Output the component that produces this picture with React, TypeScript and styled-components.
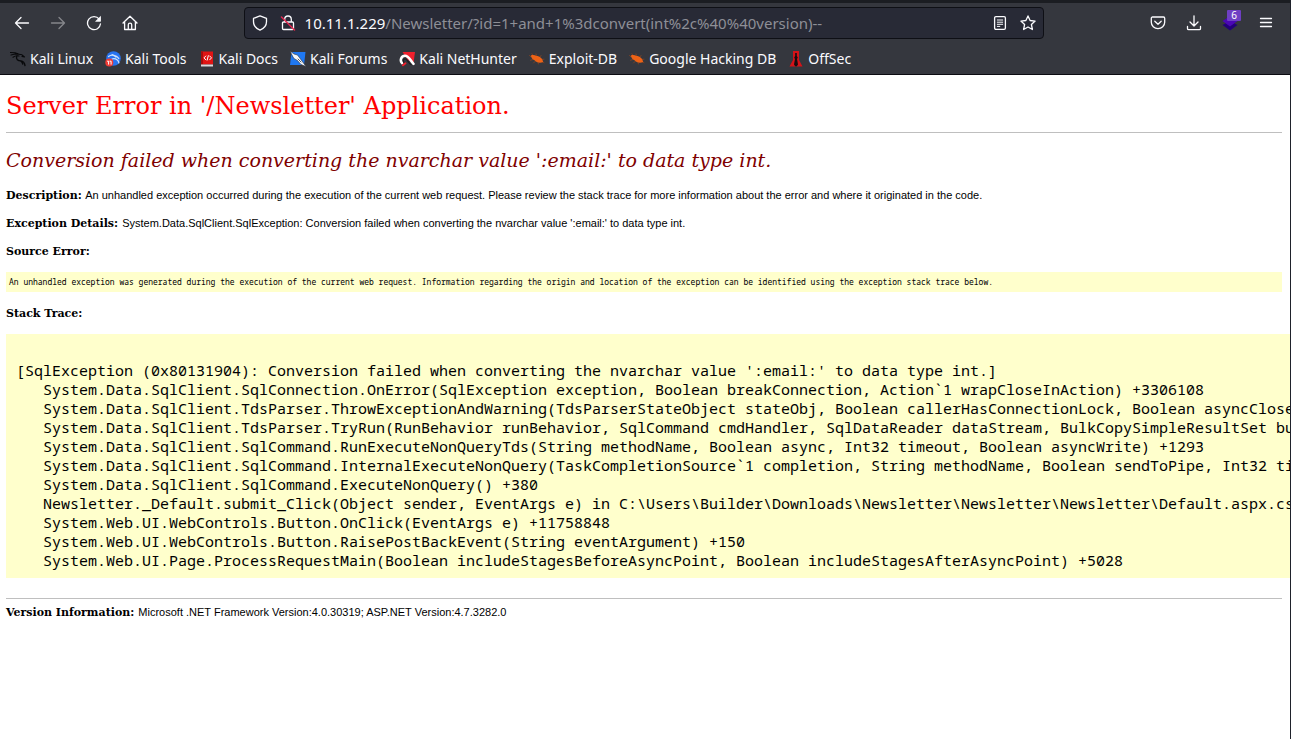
import React from "react";
import styled, { createGlobalStyle } from "styled-components";

const GlobalStyle = createGlobalStyle`
  * { box-sizing: border-box; }
  html, body, #root { height: 100%; }
  body { margin: 0; background: #fff; overflow: hidden; }
`;

const Window = styled.div`
  min-height: 100%;
  display: flex;
  flex-direction: column;
  border-right: 1px solid #1f222b;
  overflow: hidden;
`;

const Chrome = styled.header`
  flex: none;
  border-top: 3px solid #1b1d22;
  border-bottom: 1px solid #0c0c12;
  background: #35373e;
  color: #fbfbfe;
  font-family: "Noto Sans", sans-serif;
`;

const Toolbar = styled.nav`
  display: flex;
  align-items: center;
  height: 40px;
  padding: 0 6px 0 4px;
`;

const ButtonGroup = styled.div`
  display: flex;
  flex: none;
`;

const Spring = styled.div`
  flex: 3 1 0;
`;

const ToolButton = styled.button`
  display: flex;
  align-items: center;
  justify-content: center;
  position: relative;
  width: 36px;
  height: 32px;
  padding: 0;
  border: 0;
  background: none;
  color: #fbfbfe;
  &:disabled { color: #85868b; }
`;

const Badge = styled.span`
  position: absolute;
  top: 3px;
  right: 7px;
  width: 14px;
  height: 11px;
  border-radius: 1px;
  background: #6f3fc4;
  color: #fff;
  font: 10px/11px "Noto Sans", sans-serif;
  text-align: center;
`;

const AddressBar = styled.form`
  flex: 25 1 0;
  min-width: 0;
  display: flex;
  align-items: center;
  height: 32px;
  padding: 0 1px;
  border: 1px solid #0e0f15;
  border-radius: 4px;
  background: #282a36;
`;

const FieldButton = styled(ToolButton)`
  flex: none;
  width: 28px;
  height: 28px;
`;

const Host = styled.label`
  flex: none;
  padding-left: 3px;
  font-size: 15px;
  line-height: 20px;
`;

const Address = styled.input`
  flex: 1;
  min-width: 0;
  padding: 0;
  border: 0;
  outline: 0;
  background: none;
  color: #8e8f96;
  font: 15px/20px "Noto Sans", sans-serif;
`;

const Bookmarks = styled.nav`
  display: flex;
  align-items: center;
  gap: 12px;
  height: 31px;
  padding: 0 10px;
`;

const Bookmark = styled.a`
  display: flex;
  align-items: center;
  gap: 4px;
  color: #fbfbfe;
  font-size: 14px;
  line-height: 20px;
  white-space: nowrap;
  text-decoration: none;
`;

const Page = styled.main`
  flex: 1;
  padding: 15px 8px 14px 6px;
  background: #fff;
  color: #000;
  font: 11px/14px "Liberation Sans", Arial, sans-serif;
`;

const Title = styled.h1`
  margin: 0 0 10px;
  color: #f00;
  font: 24px/32px "DejaVu Serif", serif;
`;

const Rule = styled.hr`
  height: 1px;
  margin: 0;
  border: 0;
  background: #bfbfbf;
`;

const Subtitle = styled.h2`
  margin: 15px 0 16px;
  color: #800000;
  font: italic 19px/24px "DejaVu Serif", serif;
`;

const Line = styled.p`
  margin: 0 0 13px;
`;

const Term = styled.b`
  margin-right: 1px;
  font-family: "DejaVu Serif", serif;
`;

const Note = styled.pre`
  margin: 0 0 14px;
  padding: 4px 3px;
  background: #ffffcc;
  font: 8px/12px "Noto Sans Mono", "DejaVu Sans Mono", monospace;
`;

const Trace = styled.pre`
  min-width: max-content;
  margin: 0 -8px 20px 0;
  padding: 8px 10px;
  background: #ffffcc;
  font: 15px/19px "Noto Sans Mono", "DejaVu Sans Mono", monospace;
`;

const Version = styled.footer`
  padding-top: 6px;
`;

type GlyphProps = { children: React.ReactNode; size?: number };

const Glyph = ({ children, size = 16 }: GlyphProps) => (
  <svg width={size} height={size} viewBox="0 0 16 16" fill="none" stroke="currentColor"
    strokeWidth="1.3" strokeLinecap="round" strokeLinejoin="round" aria-hidden="true">
    {children}
  </svg>
);

const Dragon = () => (
  <Glyph>
    <path d="M0 1.500l5 .2 3.500 1.300M1 4l4-1 3.500 .2M3 6.200C5 4.800 7 4.300 9 5M9 3.200l3 .6 2.500 2.200-2.500-.6" stroke="#08090b" strokeWidth="1.100" />
    <path d="M6.800 5.200C5.500 8.500 8 9.800 11 9.900c2.500.2 3.500 2 4 4.600M10.500 10c1.500.8 2 2 2.300 3" stroke="#08090b" strokeWidth="1.400" />
  </Glyph>
);

const ToolsMark = () => (
  <Glyph>
    <circle cx="8.500" cy="7.500" r="7.300" fill="#2874f0" stroke="none" />
    <path d="M3.500 5.500c2.500-2 5.500-1.600 7.500.5M7 8c2-.6 3.500-.3 5 .7 1.300.9 1.800 2 1.900 3.200M7 3.600l4.500 1.600 2.300 2.300" stroke="#cfe1fb" strokeWidth="1.200" />
    <circle cx="4.300" cy="11.500" r="4" fill="#ef3b35" stroke="none" />
    <path d="M2.500 10.200h1.100v3M5 10.200h1.100v3" stroke="#fff" strokeWidth="1" />
  </Glyph>
);

const DocsMark = () => (
  <Glyph>
    <path d="M2 .5h12v13H2z" fill="#e11414" stroke="none" />
    <path d="M2 .5h2v13H2z" fill="#a90b0b" stroke="none" />
    <path d="M2 13.500h12V15.500H2z" fill="#d9d9dc" stroke="none" />
    <path d="M6.800 5L5 6.900l1.800 1.900M10.700 5l1.800 1.900-1.800 1.900M9.300 4.700L8.200 9.100" stroke="#fff" strokeWidth="1" />
  </Glyph>
);

const ForumsMark = () => (
  <Glyph>
    <path d="M1.500 1h14l-1.500 13H0z" fill="#1f78f2" stroke="none" />
    <path d="M0 0l4 3 3.500 1 3 4 5.500 7.500-5-2-3.500-4L4 7.500z" fill="#f4f7fa" stroke="#30343b" strokeWidth=".6" />
    <path d="M8 8l3 3" stroke="#30343b" strokeWidth=".8" />
  </Glyph>
);

const HunterMark = () => (
  <Glyph>
    <path d="M3.500 1H16l-1.500 11L9 9z" fill="#f0202d" stroke="none" />
    <path d="M3 12C.5 9 2.500 4.800 6 4.800c4 0 5 4.500 8.500 8" stroke="#fff" strokeWidth="2.600" />
    <path d="M5 11.500c-1.500-2-.5-3.700 1-3.700 2.500 0 3 4 6 5.700" stroke="#1d1e22" strokeWidth="1.300" />
    <path d="M4 14.300l2.500-2" stroke="#f0202d" strokeWidth="2" />
  </Glyph>
);

const BugMark = () => (
  <Glyph>
    <path d="M4.500 5L3 2.800M7.500 5l-.5-2M10.500 6.500l1.500-2M12.500 8.500l2.500-.3M4 8.500l-2.500.7M6 10.500L4.500 12M9 11.500l.5 1.500M13 10.500l2 1.200M2 6L.5 4.500" stroke="#8c451f" strokeWidth=".8" />
    <path d="M1.800 4.500c2-.8 4.200-.5 5.700.4 3.300 0 6 2.300 6.700 6.100-3 1.300-7 .6-8.700-1.800C3.500 8.500 2.300 6.800 1.800 4.500z" fill="#ed6216" stroke="none" />
  </Glyph>
);

const OffSecMark = () => (
  <Glyph>
    <path d="M5 0h6v9l3.500 6.500h-13L5 9z" fill="#d51218" stroke="none" />
    <path d="M7.200 2h1.600v3l1 1.500-.8 1.500 1 5.500-1.200 1.800H7.200L6 13.500 7 8l-.8-1.500 1-1.500z" fill="#160d10" stroke="none" />
  </Glyph>
);

const bookmarks = [
  { name: "Kali Linux", icon: <Dragon /> },
  { name: "Kali Tools", icon: <ToolsMark /> },
  { name: "Kali Docs", icon: <DocsMark /> },
  { name: "Kali Forums", icon: <ForumsMark /> },
  { name: "Kali NetHunter", icon: <HunterMark /> },
  { name: "Exploit-DB", icon: <BugMark /> },
  { name: "Google Hacking DB", icon: <BugMark /> },
  { name: "OffSec", icon: <OffSecMark /> },
];

const stack = String.raw`
[SqlException (0x80131904): Conversion failed when converting the nvarchar value ':email:' to data type int.]
   System.Data.SqlClient.SqlConnection.OnError(SqlException exception, Boolean breakConnection, Action${"`"}1 wrapCloseInAction) +3306108
   System.Data.SqlClient.TdsParser.ThrowExceptionAndWarning(TdsParserStateObject stateObj, Boolean callerHasConnectionLock, Boolean asyncClose) +
   System.Data.SqlClient.TdsParser.TryRun(RunBehavior runBehavior, SqlCommand cmdHandler, SqlDataReader dataStream, BulkCopySimpleResultSet bulkC
   System.Data.SqlClient.SqlCommand.RunExecuteNonQueryTds(String methodName, Boolean async, Int32 timeout, Boolean asyncWrite) +1293
   System.Data.SqlClient.SqlCommand.InternalExecuteNonQuery(TaskCompletionSource${"`"}1 completion, String methodName, Boolean sendToPipe, Int32 timeo
   System.Data.SqlClient.SqlCommand.ExecuteNonQuery() +380
   Newsletter._Default.submit_Click(Object sender, EventArgs e) in C:\Users\Builder\Downloads\Newsletter\Newsletter\Newsletter\Default.aspx.cs:43
   System.Web.UI.WebControls.Button.OnClick(EventArgs e) +11758848
   System.Web.UI.WebControls.Button.RaisePostBackEvent(String eventArgument) +150
   System.Web.UI.Page.ProcessRequestMain(Boolean includeStagesBeforeAsyncPoint, Boolean includeStagesAfterAsyncPoint) +5028`;

export default function App() {
  return (
    <>
      <GlobalStyle />
      <Window>
        <Chrome>
          <Toolbar aria-label="Navigation">
            <ButtonGroup>
              <ToolButton aria-label="Back">
                <Glyph><path d="M14.500 8H1.500M7 2.500L1.500 8 7 13.500" /></Glyph>
              </ToolButton>
              <ToolButton aria-label="Forward" disabled>
                <Glyph><path d="M1.500 8h13M9 2.500L14.500 8 9 13.500" /></Glyph>
              </ToolButton>
              <ToolButton aria-label="Reload">
                <Glyph>
                  <path d="M13.200 4.200A6.500 6.500 0 1 0 14.500 8.800" />
                  <path d="M14.500 1.800v4.500H10z" fill="currentColor" strokeWidth=".8" />
                </Glyph>
              </ToolButton>
              <ToolButton aria-label="Home">
                <Glyph>
                  <path d="M1 8l7-6.800L15 8M2.600 6.800v7.700h10.800V6.800M6.300 14.200V9.800c0-1.100.6-1.600 1.700-1.600s1.700.5 1.700 1.600v4.400" />
                </Glyph>
              </ToolButton>
            </ButtonGroup>
            <Spring />
            <AddressBar onSubmit={(e) => e.preventDefault()}>
              <FieldButton type="button" aria-label="Tracking protection">
                <Glyph>
                  <path d="M8 .8l6.500 2.600v3.400c0 3.800-2.700 6.800-6.500 8.400-3.800-1.600-6.500-4.600-6.500-8.400V3.400z" />
                </Glyph>
              </FieldButton>
              <FieldButton type="button" aria-label="Connection not secure">
                <Glyph>
                  <path d="M4.700 7V4.300a3.300 3.300 0 0 1 6.600 0V7M3.500 7h9c.7 0 1 .4 1 1v5.500c0 .7-.3 1-1 1h-9c-.7 0-1-.3-1-1V8c0-.6.3-1 1-1z" />
                  <path d="M1.500 2l13 13" stroke="#e22850" strokeWidth="1.500" />
                </Glyph>
              </FieldButton>
              <Host htmlFor="address">10.11.1.229</Host>
              <Address id="address" defaultValue="/Newsletter/?id=1+and+1%3dconvert(int%2c%40%40version)--" />
              <FieldButton type="button" aria-label="Reader view">
                <Glyph>
                  <rect x="2.600" y="1.600" width="10.800" height="12.800" rx="1.300" />
                  <path d="M5.300 5h5.400M5.300 7.200h5.400M5.300 9.300h5.400M5.300 11.400h2.500" strokeWidth="1" />
                </Glyph>
              </FieldButton>
              <FieldButton type="button" aria-label="Bookmark this page">
                <Glyph>
                  <path d="M8 .9l2.100 4.600 5 .6-3.700 3.400 1 5L8 12l-4.400 2.500 1-5L.9 6.100l5-.6z" />
                </Glyph>
              </FieldButton>
            </AddressBar>
            <Spring />
            <ButtonGroup>
              <ToolButton aria-label="Save to Pocket">
                <Glyph>
                  <path d="M2.500 2h11c.7 0 1.200.5 1.200 1.200v4a6.700 6.400 0 0 1-13.400 0v-4C1.300 2.500 1.800 2 2.500 2z" />
                  <path d="M4.800 6.300L8 9.300l3.200-3" />
                </Glyph>
              </ToolButton>
              <ToolButton aria-label="Downloads">
                <Glyph><path d="M8 .8v10M4 7l4 4 4-4M1.500 11.500v2c0 .7.500 1.200 1.200 1.200h10.600c.7 0 1.200-.5 1.200-1.200v-2" /></Glyph>
              </ToolButton>
              <ToolButton aria-label="Extension, 6 items">
                <Glyph>
                  <path d="M8 6l7.500 4L8 15.500.5 10z" fill="#23007a" stroke="none" />
                  <path d="M8 1l7.500 5L8 11.500.5 6z" fill="#4a07b5" stroke="none" />
                </Glyph>
                <Badge>6</Badge>
              </ToolButton>
              <ToolButton aria-label="Open menu">
                <Glyph><path d="M2.500 3.500h11M2.500 7.500h11M2.500 11.500h11" /></Glyph>
              </ToolButton>
            </ButtonGroup>
          </Toolbar>
          <Bookmarks aria-label="Bookmarks">
            {bookmarks.map(({ name, icon }) => (
              <Bookmark key={name} href="#">{icon}{name}</Bookmark>
            ))}
          </Bookmarks>
        </Chrome>
        <Page>
          <Title>Server Error in '/Newsletter' Application.</Title>
          <Rule />
          <Subtitle>Conversion failed when converting the nvarchar value ':email:' to data type int.</Subtitle>
          <Line>
            <Term>Description:</Term> An unhandled exception occurred during the execution of the current web request. Please review the stack trace for more information about the error and where it originated in the code.
          </Line>
          <Line>
            <Term>Exception Details:</Term> System.Data.SqlClient.SqlException: Conversion failed when converting the nvarchar value ':email:' to data type int.
          </Line>
          <Line><Term>Source Error:</Term></Line>
          <Note>An unhandled exception was generated during the execution of the current web request. Information regarding the origin and location of the exception can be identified using the exception stack trace below.</Note>
          <Line><Term>Stack Trace:</Term></Line>
          <Trace>{stack}</Trace>
          <Rule />
          <Version>
            <Term>Version Information:</Term> Microsoft .NET Framework Version:4.0.30319; ASP.NET Version:4.7.3282.0
          </Version>
        </Page>
      </Window>
    </>
  );
}
